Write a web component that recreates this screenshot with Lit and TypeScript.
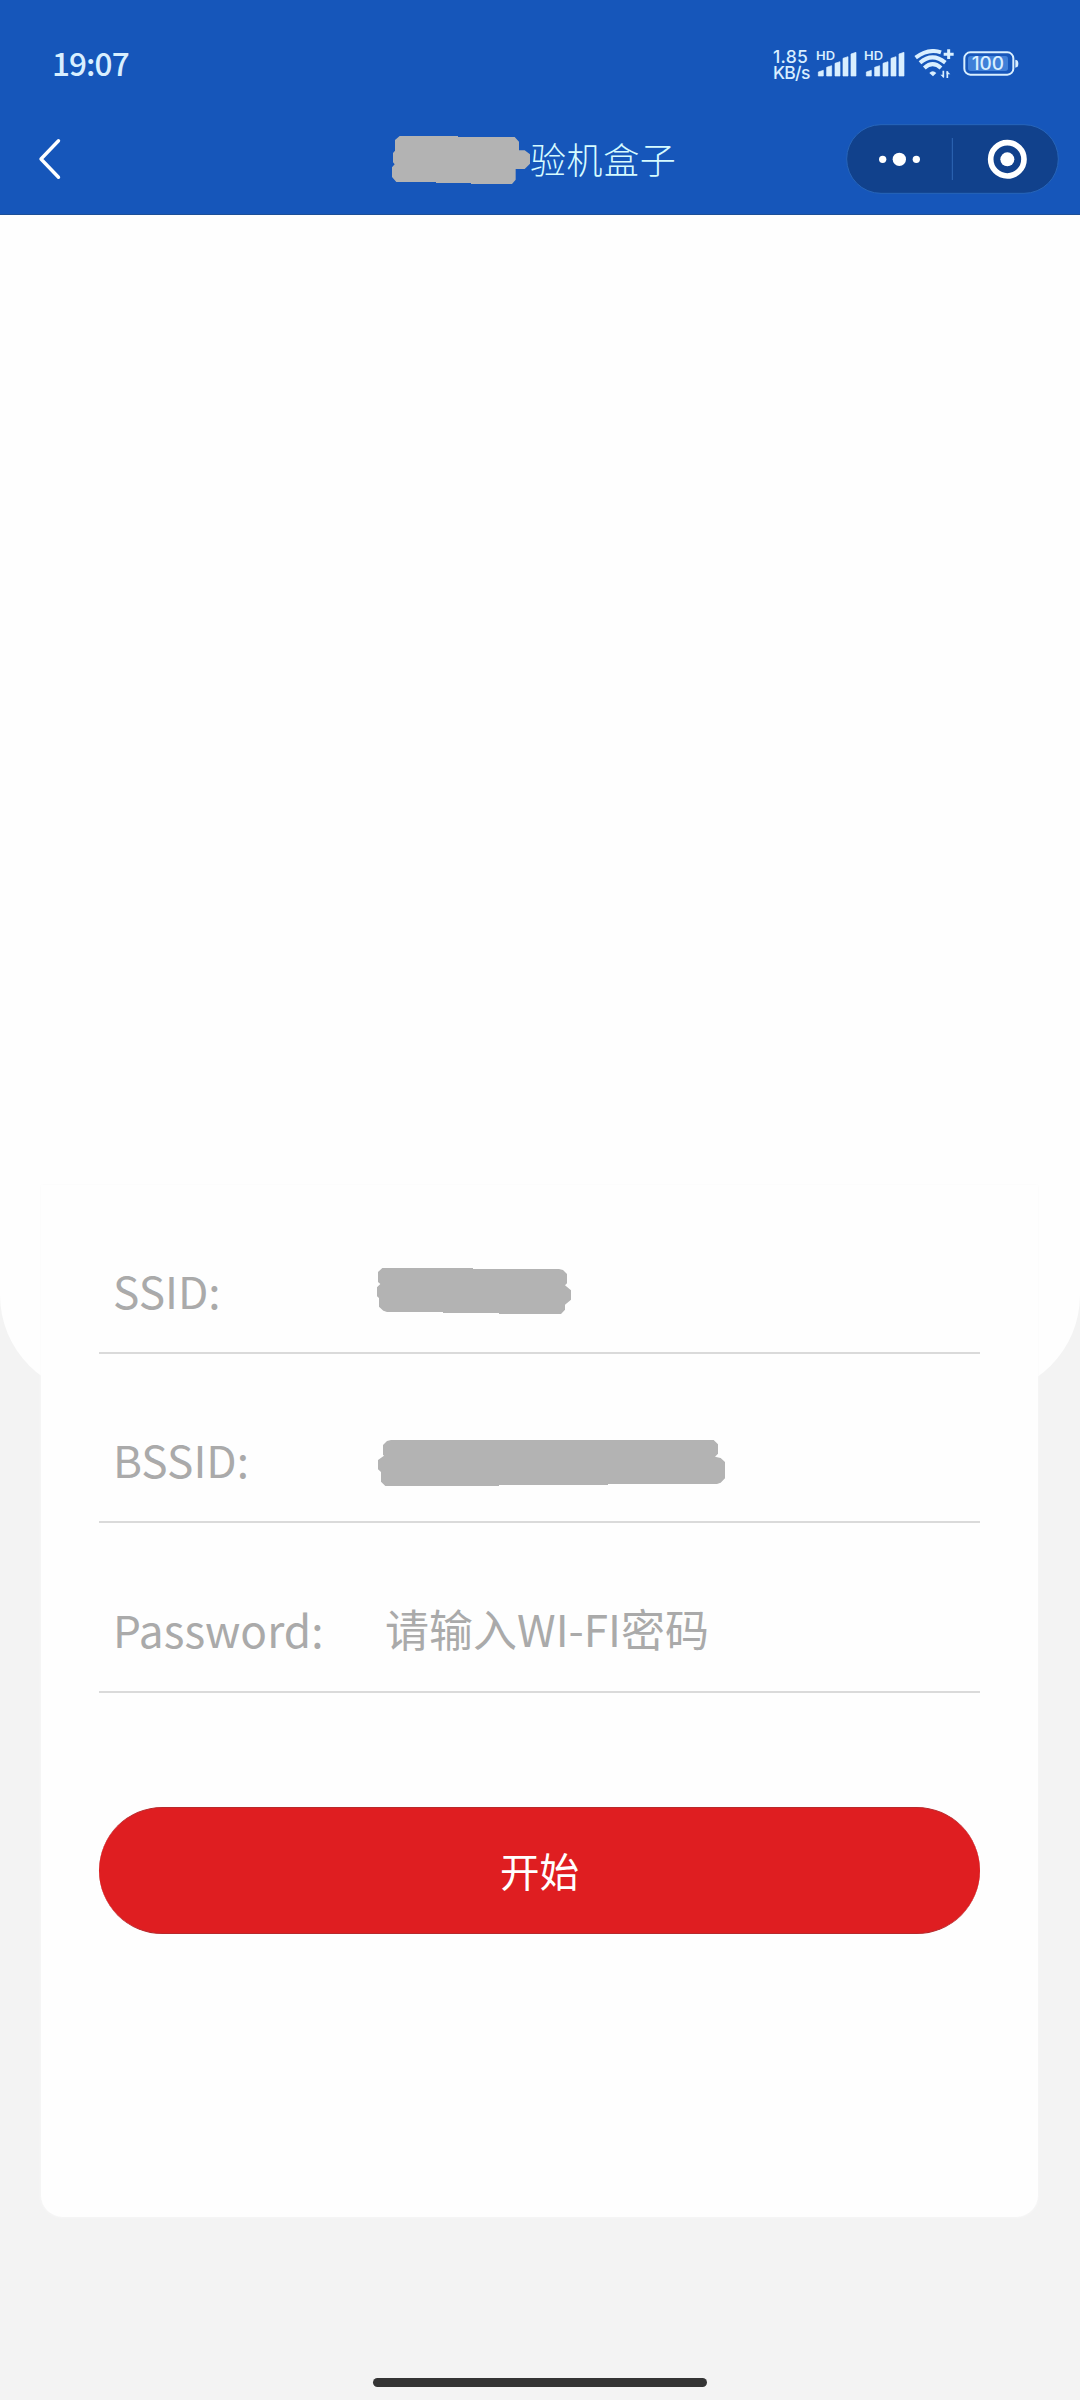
import { LitElement, html, css, svg } from "lit";
import { customElement, property } from "lit/decorators.js";

@customElement("status-bar")
class StatusBar extends LitElement {
  static styles = css`
    :host { display: flex; height: 104px; color: #d9efff; }
    .bar { display: flex; flex: 1; padding: 0 61px 0 52px; }
    .time { margin-top: 36px; height: 52px; line-height: 52px; font-size: 31.5px; font-weight: 500; letter-spacing: -0.9px; }
    .right { display: flex; margin-left: auto; margin-top: 49px; height: 30px; font-family: "Inter", sans-serif; }
    .net { width: 43px; display: flex; flex-direction: column; font-size: 17.5px; line-height: 16px; font-weight: 500; white-space: nowrap; }
    .rate { letter-spacing: 0.3px; }
    .unit { letter-spacing: -0.7px; }
    .sig { width: 40px; height: 30px; margin-right: 8px; overflow: visible; }
    .sig.last { margin-right: 10px; }
    .wifi { width: 41px; height: 30px; margin-right: 7px; }
    .battery { width: 57px; height: 30px; }
    .hd { font-size: 35px; font-weight: 600; }
    .pct { font-size: 54px; font-weight: 500; }
  `;
  private signal(last: boolean) {
    const bars = [[205, 121], [230, 107], [255, 95], [279, 80], [303, 67]];
    return html`<svg class="sig ${last ? "last" : ""}" viewBox="198 57 120 90" fill="currentColor">
      <text class="hd" x="198" y="90" textLength="57" lengthAdjust="spacingAndGlyphs">HD</text>
      ${bars.map(([x, y]) => svg`<path d="M${x} ${y + 5}L${x + 15} ${y}V138H${x}Z" stroke="currentColor" stroke-width="2" stroke-linejoin="round"/>`)}
    </svg>`;
  }
  render() {
    return html`<div class="bar">
      <div class="time">19:07</div>
      <div class="right">
        <div class="net"><span class="rate">1.85</span><span class="unit">KB/s</span></div>
        ${this.signal(false)}${this.signal(true)}
        <svg class="wifi" viewBox="492 57 123 90" fill="none" stroke="currentColor" stroke-width="12">
          <path d="M497 83Q535 54 573 67"/>
          <path d="M510 98Q547 66 586 98"/>
          <path d="M523 114Q548 91 573 114"/>
          <path d="M538 129Q548 119 559 129L549 139Z" fill="currentColor" stroke="none"/>
          <path d="M596 58V87M581 73H611" stroke-width="9"/>
          <path d="M580 122V142M592 124V144" stroke-width="5"/>
          <path d="M571 134L582 144V134ZM590 122L601 133H590Z" fill="currentColor" stroke="none"/>
        </svg>
        <svg class="battery" viewBox="636 57 171 90">
          <rect x="643" y="67" width="147" height="67" rx="18" fill="none" stroke="currentColor" stroke-width="6"/>
          <rect x="654" y="78" width="120" height="45" rx="8" fill="#4080d8"/>
          <path d="M796 89q9 1 9 12t-9 12Z" fill="currentColor"/>
          <text class="pct" x="665" y="121" textLength="97" lengthAdjust="spacingAndGlyphs" fill="currentColor">100</text>
        </svg>
      </div>
    </div>`;
  }
}

@customElement("nav-bar")
class NavBar extends LitElement {
  static styles = css`
    :host { display: flex; height: 110px; border-bottom: 1px solid #1d4f97; }
    .nav { display: flex; flex: 1; align-items: center; padding: 0 21px 0 36px; }
    .back { width: 28px; height: 46px; margin-right: 328px; }
    .mask { width: 138px; height: 48px; margin-top: 1px; }
    .title { color: #d6fbff; font-size: 36px; letter-spacing: 0.6px; font-weight: 300; line-height: 50px; margin-top: -3px; white-space: nowrap; }
    .capsule { width: 213px; height: 70px; margin-left: auto; }
  `;
  render() {
    return html`<div class="nav">
      <svg class="back" viewBox="36 136 28 46"><path d="M58.5 140.8L41 159L58.5 177.2" fill="none" stroke="#fff" stroke-width="3.4" stroke-linecap="round" stroke-linejoin="round"/></svg>
      <svg class="mask" viewBox="96 75 414 144" fill="#b3b3b3"><path d="M119 75H294V78H464L477 92V118H494L510 130V158L494 174H467V206L456 219H333V216H228V213H109L96 198V169L104 160L99 154V126L105 119V87Z"/></svg>
      <div class="title">验机盒子</div>
      <svg class="capsule" viewBox="288 282 639 210">
        <rect x="290" y="284" width="635" height="206" rx="103" fill="#11418c" stroke="#2765b9" stroke-width="3"/>
        <g fill="#fff"><circle cx="398" cy="388" r="11"/><circle cx="448" cy="388" r="20"/><circle cx="499" cy="388" r="11"/><circle cx="772" cy="388" r="21"/></g>
        <circle cx="772" cy="388" r="50" fill="none" stroke="#fff" stroke-width="17"/>
        <path d="M607 324V450" stroke="#2f67b5" stroke-width="3"/>
      </svg>
    </div>`;
  }
}

@customElement("form-row")
class FormRow extends LitElement {
  @property() label = "";
  static styles = css`
    :host { display: flex; box-sizing: border-box; height: 169px; border-bottom: 2px solid #dadada; align-items: flex-end; padding: 0 0 32px 14px; color: #aaa; }
    .label { width: 264px; font-size: 44.2px; line-height: 60px; white-space: nowrap; }
    .value { display: flex; align-items: center; height: 60px; }
  `;
  render() {
    return html`<div class="label">${this.label}</div><div class="value"><slot></slot></div>`;
  }
}

@customElement("app-root")
class AppRoot extends LitElement {
  static styles = css`
    :host { display: block; font-family: "Noto Sans CJK SC", sans-serif; }
    .page { display: flex; flex-direction: column; width: 1080px; height: 2400px; background: #f3f3f3; overflow: hidden; }
    .header { background: #1656ba; height: 215px; flex: none; }
    .hero { height: 1180px; flex: none; background: #fefefe; border-radius: 0 0 100px 100px; }
    .card { flex: none; box-sizing: border-box; width: 997px; height: 1032px; margin: -210px 0 0 41px; padding: 0 58px; border-radius: 0 0 22px 22px; background: #fefefe; box-shadow: 0 0 3px #fafafa; display: flex; flex-direction: column; }
    .tall { height: 170px; }
    .ssid { width: 194px; height: 46px; margin-top: 1px; }
    .bssid { width: 347px; height: 46px; margin: 8px 0 0 1px; }
    .hint { font-size: 44px; line-height: 60px; margin: -2px 0 0 8px; white-space: nowrap; }
    .start { height: 127px; margin-top: 114px; border-radius: 64px; background: #df1e21; color: #fff; font-size: 39.5px; display: flex; align-items: center; justify-content: center; box-sizing: border-box; padding-bottom: 3px; border: solid #b8292c; border-width: 1px 0; }
    .home { width: 334px; height: 9px; border-radius: 5px; background: #343434; margin: auto auto 13px 373px; }
  `;
  render() {
    return html`<div class="page">
      <div class="header"><status-bar></status-bar><nav-bar></nav-bar></div>
      <div class="hero"></div>
      <div class="card">
        <form-row label="SSID:">
          <svg class="ssid" viewBox="111 114 582 138" fill="#b3b3b3"><path d="M127 114H399V117H657L669 120L681 132V160L675 166L693 181V209L675 224V239L663 252H477V249H309V246H141L130 242L117 230V204L111 199V172L121 162L114 156V126Z"/></svg>
        </form-row>
        <form-row label="BSSID:">
          <svg class="bssid" viewBox="114 633 1041 138" fill="#b3b3b3"><path d="M153 633H1121L1134 646V674L1125 683L1142 687L1155 699V748L1142 761L1131 765H804V768H477V771H136L123 758V729L114 721V693L132 680L129 677V648L141 636Z"/></svg>
        </form-row>
        <form-row class="tall" label="Password:"><span class="hint">请输入WI-FI密码</span></form-row>
        <div class="start">开始</div>
      </div>
      <div class="home"></div>
    </div>`;
  }
}
